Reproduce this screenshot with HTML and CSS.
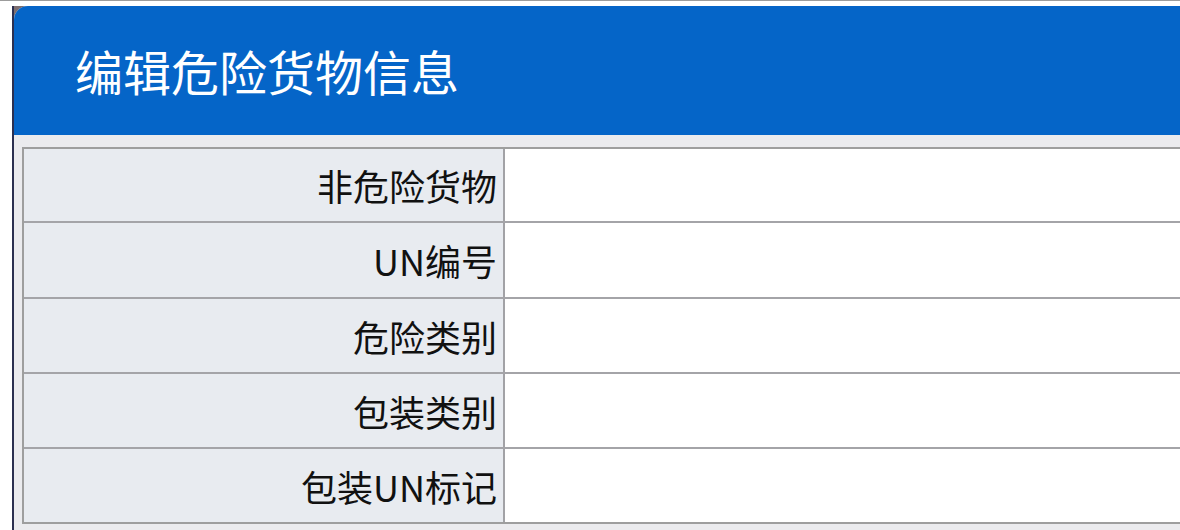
FILE: index.html
```html
<!DOCTYPE html>
<html lang="zh-CN">
<head>
<meta charset="utf-8">
<title>编辑危险货物信息</title>
<link rel="stylesheet" href="styles.css">
</head>
<body>
<div class="page">
  <div class="frame">
    <div class="dialog">
      <div class="header">
        <h1 class="title">编辑危险货物信息</h1>
      </div>
      <div class="body">
        <div class="form">
          <div class="row"><div class="label">非危险货物</div><div class="value"></div></div>
          <div class="row"><div class="label">UN编号</div><div class="value"></div></div>
          <div class="row"><div class="label">危险类别</div><div class="value"></div></div>
          <div class="row"><div class="label">包装类别</div><div class="value"></div></div>
          <div class="row"><div class="label">包装UN标记</div><div class="value"></div></div>
        </div>
      </div>
    </div>
  </div>
</div>
</body>
</html>
```
FILE: styles.css
```css
html, body {
  margin: 0;
  padding: 0;
  background: #ffffff;
  overflow: hidden;
  width: 1180px;
  height: 530px;
  font-family: "Noto Sans CJK SC", "Noto Sans", sans-serif;
}

.page {
  border-top: 1px solid #9c9c9c;
  padding: 5px 0 0 12px;
  height: 524px;
  box-sizing: content-box;
}

.frame {
  width: 1200px;
  height: 530px;
  border-left: 2px solid #2c3050;
  background: #7d6e70;
}

.dialog {
  width: 1200px;
  height: 530px;
  border-top-left-radius: 14px;
  overflow: hidden;
  background: #ebebee;
}

.header {
  height: 129px;
  background: #0565c8;
  display: flex;
  align-items: center;
  padding-left: 61px;
}

.title {
  margin: 0;
  font-size: 48px;
  font-weight: 400;
  color: #ffffff;
  line-height: 1;
  padding-bottom: 2px;
}

.body {
  padding: 12px 0 0 8px;
}

.form {
  border: 2px solid #9e9e9e;
  border-right: none;
  background: #ffffff;
}

.row {
  display: grid;
  grid-template-columns: 481px 1fr;
  height: 75px;
  box-sizing: border-box;
  border-top: 2px solid #a4a4a8;
}

.row:first-child {
  border-top: none;
  height: 72px;
}

.row:nth-child(2) {
  height: 76px;
}

.label {
  background: #e8ebf0;
  border-right: 2px solid #a2a2a6;
  display: flex;
  align-items: center;
  justify-content: flex-end;
  padding-right: 6px;
  font-size: 36px;
  color: #111111;
  line-height: 1;
}

.value {
  background: #ffffff;
}
```
